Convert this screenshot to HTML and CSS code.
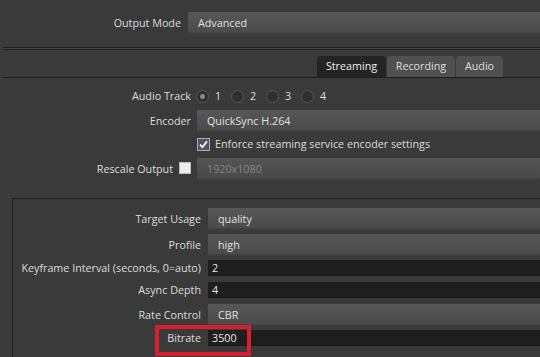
FILE: index.html
```html
<!DOCTYPE html>
<html>
<head>
<meta charset="utf-8">
<link rel="stylesheet" href="styles.css">
</head>
<body>
<div class="page">
  <div class="top">
    <div class="row row-top">
      <div class="label lab-top">Output Mode</div>
      <div class="combo">Advanced</div>
    </div>
  </div>
  <div class="sep"></div>
  <div class="tabbar">
    <div class="tab active tab-streaming">Streaming</div>
    <div class="tab tab-recording">Recording</div>
    <div class="tab tab-audio">Audio</div>
  </div>
  <div class="pane">
    <div class="row row-plain">
      <div class="label lab-pane">Audio Track</div>
      <div class="radios">
        <span class="radio-item"><span class="radio checked"></span><span>1</span></span>
        <span class="radio-item"><span class="radio"></span><span>2</span></span>
        <span class="radio-item"><span class="radio"></span><span>3</span></span>
        <span class="radio-item"><span class="radio"></span><span>4</span></span>
      </div>
    </div>
    <div class="row">
      <div class="label lab-pane">Encoder</div>
      <div class="combo">QuickSync H.264</div>
    </div>
    <div class="row row-plain">
      <div class="label lab-pane"></div>
      <div class="check-line">
        <span class="checkbox checked">
          <svg width="11" height="11" viewBox="0 0 11 11"><path d="M2 5.6 L4.4 8.2 L9 2.4" fill="none" stroke="#ffffff" stroke-width="1.7"/></svg>
        </span>
        <span>Enforce streaming service encoder settings</span>
      </div>
    </div>
    <div class="row row-rescale">
      <div class="lab-pane lab-check"><span class="label">Rescale Output</span><span class="checkbox blank"></span></div>
      <div class="combo disabled">1920x1080</div>
    </div>
    <div class="group">
      <div class="row">
        <div class="label lab-group">Target Usage</div>
        <div class="combo">quality</div>
      </div>
      <div class="row">
        <div class="label lab-group">Profile</div>
        <div class="combo">high</div>
      </div>
      <div class="row row-plain">
        <div class="label lab-group">Keyframe Interval (seconds, 0=auto)</div>
        <div class="input">2</div>
      </div>
      <div class="row row-plain">
        <div class="label lab-group">Async Depth</div>
        <div class="input">4</div>
      </div>
      <div class="row">
        <div class="label lab-group">Rate Control</div>
        <div class="combo">CBR</div>
      </div>
      <div class="row row-plain highlight-row">
        <div class="label lab-group">Bitrate</div>
        <div class="input">3500</div>
        <div class="redbox"></div>
      </div>
    </div>
  </div>
</div>
</body>
</html>
```

FILE: styles.css
```css
* { box-sizing: border-box; }
html, body { margin: 0; padding: 0; }
body {
  background: #3a3a3a;
  font-family: "Open Sans", "Noto Sans", "Liberation Sans", sans-serif;
  font-size: 10.75px;
  color: #dcdcdc;
  width: 540px;
  height: 357px;
  overflow: hidden;
}
.page { width: 540px; height: 357px; overflow: hidden; }

.row { display: flex; align-items: center; }
.label {
  text-align: right;
  white-space: nowrap;
  flex: none;
  line-height: 16px;
  height: 16px;
  position: relative;
  top: 1px;
}
.row-plain .label { top: 0; }

.top { height: 47px; padding-top: 12px; }
.lab-top { width: 181px; margin-right: 7px; }

.combo {
  flex: 1;
  height: 20px;
  line-height: 18px;
  padding-top: 2px;
  padding-left: 10px;
  background: linear-gradient(#575757, #4b4b4b);
  box-shadow: 0 1px 0 #424242, 0 2px 0 #3e3e3e;
  color: #e0e0e0;
  white-space: nowrap;
}
.combo.disabled { color: #858585; background: linear-gradient(#545454, #4a4a4a); }

.input {
  flex: 1;
  height: 16px;
  line-height: 16px;
  padding-left: 4px;
  background: #1e1e1e;
  box-shadow: inset 0 -1px 0 #191919;
  color: #e6e6e6;
}

.sep {
  margin-left: 3px;
  height: 3px;
  border-top: 1px solid #1e1e1e;
  border-bottom: 1px solid #242424;
  background: #444444;
}

.tabbar {
  display: flex;
  gap: 1px;
  padding-left: 317px;
  margin-top: 6px;
  height: 21px;
}
.tab {
  height: 21px;
  line-height: 20px;
  text-align: center;
  background: #505050;
  border-radius: 4px 4px 0 0;
  color: #dedede;
}
.tab-streaming { width: 69px; }
.tab-recording { width: 68px; }
.tab-audio { width: 47px; }
.tab.active { background: #242424; color: #ececec; }

.pane {
  margin-left: 3px;
  border-top: 1px solid #1f1f1f;
  padding-top: 8px;
  display: flex;
  flex-direction: column;
  gap: 4px;
}
.lab-pane { width: 188px; margin-right: 6px; }
.pane > .row { height: 20px; }

.radios { display: flex; align-items: center; height: 20px; margin-left: -1px; }
.radio-item { display: inline-flex; align-items: center; width: 35px; gap: 6px; }
.radio {
  width: 13px; height: 13px;
  border-radius: 50%;
  background: #2f2f2f;
  border: 1px solid #575757;
  display: inline-flex; align-items: center; justify-content: center;
}
.radio.checked::after {
  content: "";
  width: 5px; height: 5px; border-radius: 50%;
  background: #8a8a8a;
}

.check-line { display: flex; align-items: center; gap: 5px; }
.checkbox {
  display: inline-flex; align-items: center; justify-content: center;
  width: 13px; height: 13px;
  flex: none;
}
.checkbox.checked { background: #4d5563; border: 1px solid #a9aeb6; }
.checkbox.blank { background: #ececec; border: 1px solid #bdbdbd; width: 12px; height: 12px; margin-left: 6px; }
.lab-check { display: flex; align-items: center; justify-content: flex-end; flex: none; }

.group {
  margin-top: 16px;
  margin-left: 9px;
  border-left: 1px solid #1f1f1f;
  border-top: 1px solid #1f1f1f;
  padding-top: 9px;
  display: flex;
  flex-direction: column;
  gap: 6px;
  height: 200px;
}
.lab-group { width: 188px; margin-right: 7px; }

.highlight-row { position: relative; }
.redbox {
  position: absolute;
  left: 142px;
  top: -5px;
  width: 96px;
  height: 31px;
  border: 4px solid #d8202c;
}
```
